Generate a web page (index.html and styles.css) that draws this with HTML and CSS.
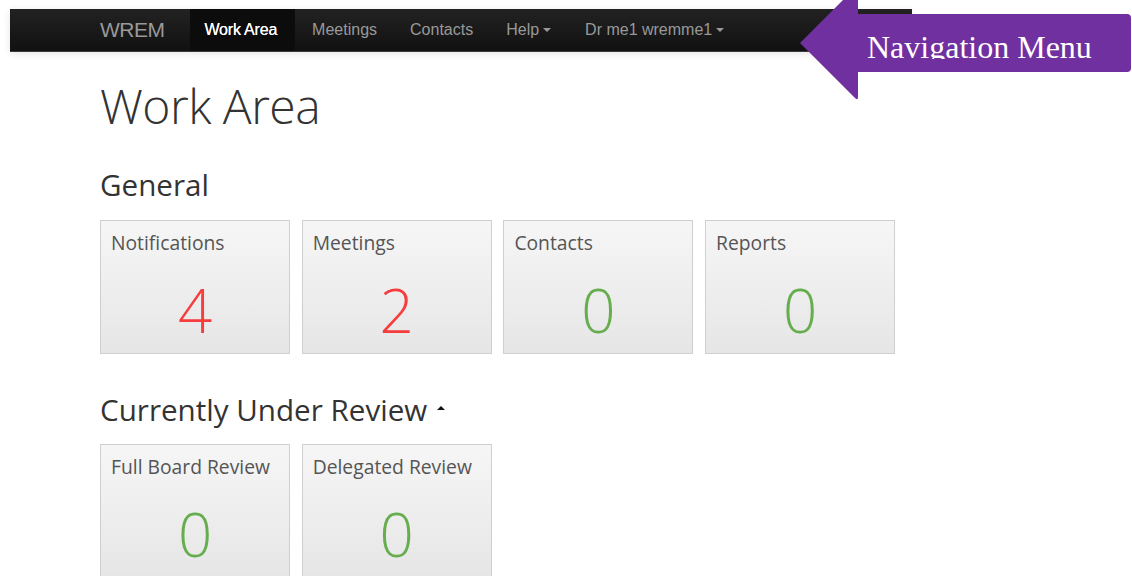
FILE: index.html
```html
<!DOCTYPE html>
<html lang="en">
<head>
<meta charset="utf-8">
<title>WREM - Work Area</title>
<link rel="stylesheet" href="styles.css">
</head>
<body>
  <div class="navbar">
    <div class="navbar-inner">
      <a class="brand" href="#">WREM</a>
      <ul class="nav">
        <li class="active"><a href="#">Work Area</a></li>
        <li><a href="#">Meetings</a></li>
        <li><a href="#">Contacts</a></li>
        <li><a href="#">Help<span class="caret"></span></a></li>
        <li><a href="#">Dr me1 wremme1<span class="caret"></span></a></li>
      </ul>
    </div>
  </div>

  <div class="callout">
    <svg class="callout-shape" width="336" height="116" viewBox="0 0 336 116">
      <path d="M2 43 L60 -15 L60 14 L329 14 Q333 14 333 18 L333 68 Q333 72 329 72 L60 72 L60 97 Q60 101 57 98 Z" fill="#7030a0"/>
    </svg>
    <span class="callout-text">Navigation Menu</span>
  </div>

  <main class="content">
    <h1 class="page-title">Work Area</h1>

    <h2 class="section-title">General</h2>
    <div class="tiles">
      <div class="tile"><div class="tile-label">Notifications</div><div class="tile-count alert">4</div></div>
      <div class="tile"><div class="tile-label">Meetings</div><div class="tile-count alert">2</div></div>
      <div class="tile"><div class="tile-label">Contacts</div><div class="tile-count ok">0</div></div>
      <div class="tile"><div class="tile-label">Reports</div><div class="tile-count ok">0</div></div>
    </div>

    <h2 class="section-title">Currently Under Review<span class="caret-up"></span></h2>
    <div class="tiles">
      <div class="tile"><div class="tile-label">Full Board Review</div><div class="tile-count ok">0</div></div>
      <div class="tile"><div class="tile-label">Delegated Review</div><div class="tile-count ok">0</div></div>
    </div>
  </main>
</body>
</html>
```

FILE: styles.css
```css
html, body {
  margin: 0;
  padding: 0;
  background: #fff;
  overflow: hidden;
}

body {
  font-family: "Open Sans", "Liberation Sans", sans-serif;
  color: #333;
  position: relative;
  height: 576px;
}

/* Top navigation bar */
.navbar {
  margin: 9px 0 0 10px;
  width: 902px;
  height: 43px;
  background: linear-gradient(#222222, #111111);
  border-bottom: 1px solid #3a3a3a;
  box-sizing: border-box;
  box-shadow: 0 2px 8px rgba(0, 0, 0, 0.10);
}

.navbar-inner {
  display: flex;
  align-items: stretch;
  height: 100%;
  padding-left: 90px;
  font-family: "Liberation Sans", Arial, sans-serif;
}

.brand {
  display: flex;
  align-items: center;
  font-size: 21px;
  color: #999;
  text-decoration: none;
  padding-right: 25px;
  letter-spacing: -0.5px;
}

.nav {
  display: flex;
  list-style: none;
  margin: 0;
  padding: 0;
}

.nav li {
  display: flex;
}

.nav a {
  display: flex;
  align-items: center;
  padding: 0 16px 1px 17px;
  font-size: 16px;
  color: #999;
  text-decoration: none;
}

.nav li.active a {
  background: #0c0c0c;
  color: #fff;
  padding: 0 18px 1px 15px;
  text-shadow: 0 0 0.6px #fff;
  letter-spacing: -0.2px;
}

.caret {
  display: inline-block;
  width: 0;
  height: 0;
  margin-left: 4px;
  margin-right: 1px;
  margin-top: 1px;
  border-top: 4px solid #999;
  border-left: 4px solid transparent;
  border-right: 4px solid transparent;
}

/* Purple callout pointing at the menu */
.callout {
  position: absolute;
  left: 798px;
  top: 0;
  width: 334px;
  height: 102px;
}

.callout-shape {
  display: block;
  position: absolute;
  left: 0;
  top: 0;
}

.callout-text {
  position: absolute;
  left: 69px;
  top: 27px;
  height: 32px;
  overflow: hidden;
  font-family: "Liberation Serif", "Times New Roman", serif;
  font-size: 32px;
  line-height: 40px;
  color: #fff;
  white-space: nowrap;
}

/* Page body */
.content {
  padding-left: 100px;
}

.page-title {
  margin: 25px 0 0;
  font-size: 48px;
  line-height: 58px;
  font-weight: 300;
  color: #333;
  letter-spacing: -0.5px;
}

.section-title {
  margin: 32px 0 0;
  font-size: 29.6px;
  line-height: 36px;
  font-weight: 400;
  color: #333;
  display: flex;
  align-items: center;
}

.tiles + .section-title {
  margin-top: 38px;
}

.caret-up {
  display: inline-block;
  width: 0;
  height: 0;
  margin-left: 10px;
  margin-top: -4px;
  border-bottom: 4px solid #111;
  border-left: 4px solid transparent;
  border-right: 4px solid transparent;
}

.tiles {
  display: flex;
  gap: 11.7px;
  margin-top: 16px;
}

.tiles:first-of-type {
  margin-top: 17px;
}

.tile {
  width: 190px;
  height: 134px;
  box-sizing: border-box;
  border: 1px solid #cfcfcf;
  background: linear-gradient(#f6f6f6, #e6e6e6);
  padding: 10px 10px 0;
}

.tile-label {
  font-size: 19.3px;
  line-height: 24px;
  color: #555;
  white-space: nowrap;
}

.tile-count {
  margin-top: 25px;
  font-size: 60px;
  line-height: 60px;
  font-weight: 300;
  text-align: center;
}

.tile-count.alert {
  color: #f63c3c;
}

.tile-count.ok {
  color: #66ad4e;
}
```
